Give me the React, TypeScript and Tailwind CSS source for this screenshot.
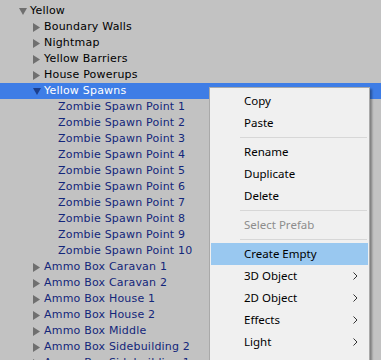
import React from "react";

type Row = {
  label: string;
  depth: number;
  arrow?: "right" | "down";
  prefab?: boolean;
  selected?: boolean;
};

const rows: Row[] = [
  { label: "Yellow", depth: 0, arrow: "down" },
  { label: "Boundary Walls", depth: 1, arrow: "right" },
  { label: "Nightmap", depth: 1, arrow: "right" },
  { label: "Yellow Barriers", depth: 1, arrow: "right" },
  { label: "House Powerups", depth: 1, arrow: "right" },
  { label: "Yellow Spawns", depth: 1, arrow: "down", selected: true },
  ...Array.from({ length: 10 }, (_, i) => ({
    label: `Zombie Spawn Point ${i + 1}`,
    depth: 2,
    prefab: true,
  })),
  { label: "Ammo Box Caravan 1", depth: 1, arrow: "right", prefab: true },
  { label: "Ammo Box Caravan 2", depth: 1, arrow: "right", prefab: true },
  { label: "Ammo Box House 1", depth: 1, arrow: "right", prefab: true },
  { label: "Ammo Box House 2", depth: 1, arrow: "right", prefab: true },
  { label: "Ammo Box Middle", depth: 1, arrow: "right", prefab: true },
  { label: "Ammo Box Sidebuilding 2", depth: 1, arrow: "right", prefab: true },
  { label: "Ammo Box Sidebuilding 1", depth: 1, arrow: "right", prefab: true },
];

const indent = ["w-[19px]", "w-[33px]", "w-[47px]"];

const Arrow = ({ dir, selected }: { dir?: "right" | "down"; selected?: boolean }) => {
  if (!dir) return <span className="w-[11px] shrink-0" />;
  const fill = selected ? "#1c3f8c" : "#6f6f6f";
  return (
    <span className="w-[11px] shrink-0 flex items-center">
      {dir === "right" ? (
        <svg width="7" height="9" viewBox="0 0 7 9">
          <path d="M0 0 L7 4.5 L0 9 Z" fill={fill} />
        </svg>
      ) : (
        <svg width="8" height="7" viewBox="0 0 8 7">
          <path d="M0 0 L8 0 L4 7 Z" fill={fill} />
        </svg>
      )}
    </span>
  );
};

type Item = { label?: string; sep?: boolean; disabled?: boolean; hover?: boolean; sub?: boolean };

const menu: Item[] = [
  { label: "Copy" },
  { label: "Paste" },
  { sep: true },
  { label: "Rename" },
  { label: "Duplicate" },
  { label: "Delete" },
  { sep: true },
  { label: "Select Prefab", disabled: true },
  { sep: true },
  { label: "Create Empty", hover: true },
  { label: "3D Object", sub: true },
  { label: "2D Object", sub: true },
  { label: "Effects", sub: true },
  { label: "Light", sub: true },
  { label: "Audio", sub: true },
];

const App = () => {
  return (
    <div className="relative w-[381px] h-[360px] overflow-hidden bg-[#c2c2c2]">
      <div className="flex flex-col pt-[3px] font-['DejaVu_Sans',sans-serif] text-[11px]">
        {rows.map((r, i) => (
          <div
            key={i}
            className={`flex items-center h-4 ${r.selected ? "bg-[#3e7de6] text-white" : r.prefab ? "text-[#13267a]" : "text-black"}`}
          >
            <span className={`${indent[r.depth]} shrink-0`} />
            <Arrow dir={r.arrow} selected={r.selected} />
            <span className="whitespace-nowrap tracking-[0.2px]">{r.label}</span>
          </div>
        ))}
      </div>

      <div className="absolute left-[209px] top-[87px] w-[161px] bg-[#f0f0f0] border border-[#a9a9a9] pt-[2px] pb-1 shadow-[2px_2px_2px_rgba(0,0,0,0.35)] font-['Noto_Sans',sans-serif] text-[11.5px] text-black">
        {menu.map((m, i) =>
          m.sep ? (
            <div key={i} className="h-[7px] flex items-center pl-[30px] pr-[2px]">
              <div className="h-px w-full bg-[#d7d7d7]" />
            </div>
          ) : (
            <div
              key={i}
              className={`h-[22px] mx-px flex items-center justify-between pl-[33px] pr-[10px] ${m.hover ? "bg-[#99c8f0]" : ""} ${m.disabled ? "text-[#8d8d8d]" : ""}`}
            >
              <span className="whitespace-nowrap">{m.label}</span>
              {m.sub && (
                <svg width="5" height="8" viewBox="0 0 5 8">
                  <path d="M0.5 0.5 L4 4 L0.5 7.5" stroke="#333" strokeWidth="1" fill="none" />
                </svg>
              )}
            </div>
          )
        )}
      </div>
    </div>
  );
};

export default App;
